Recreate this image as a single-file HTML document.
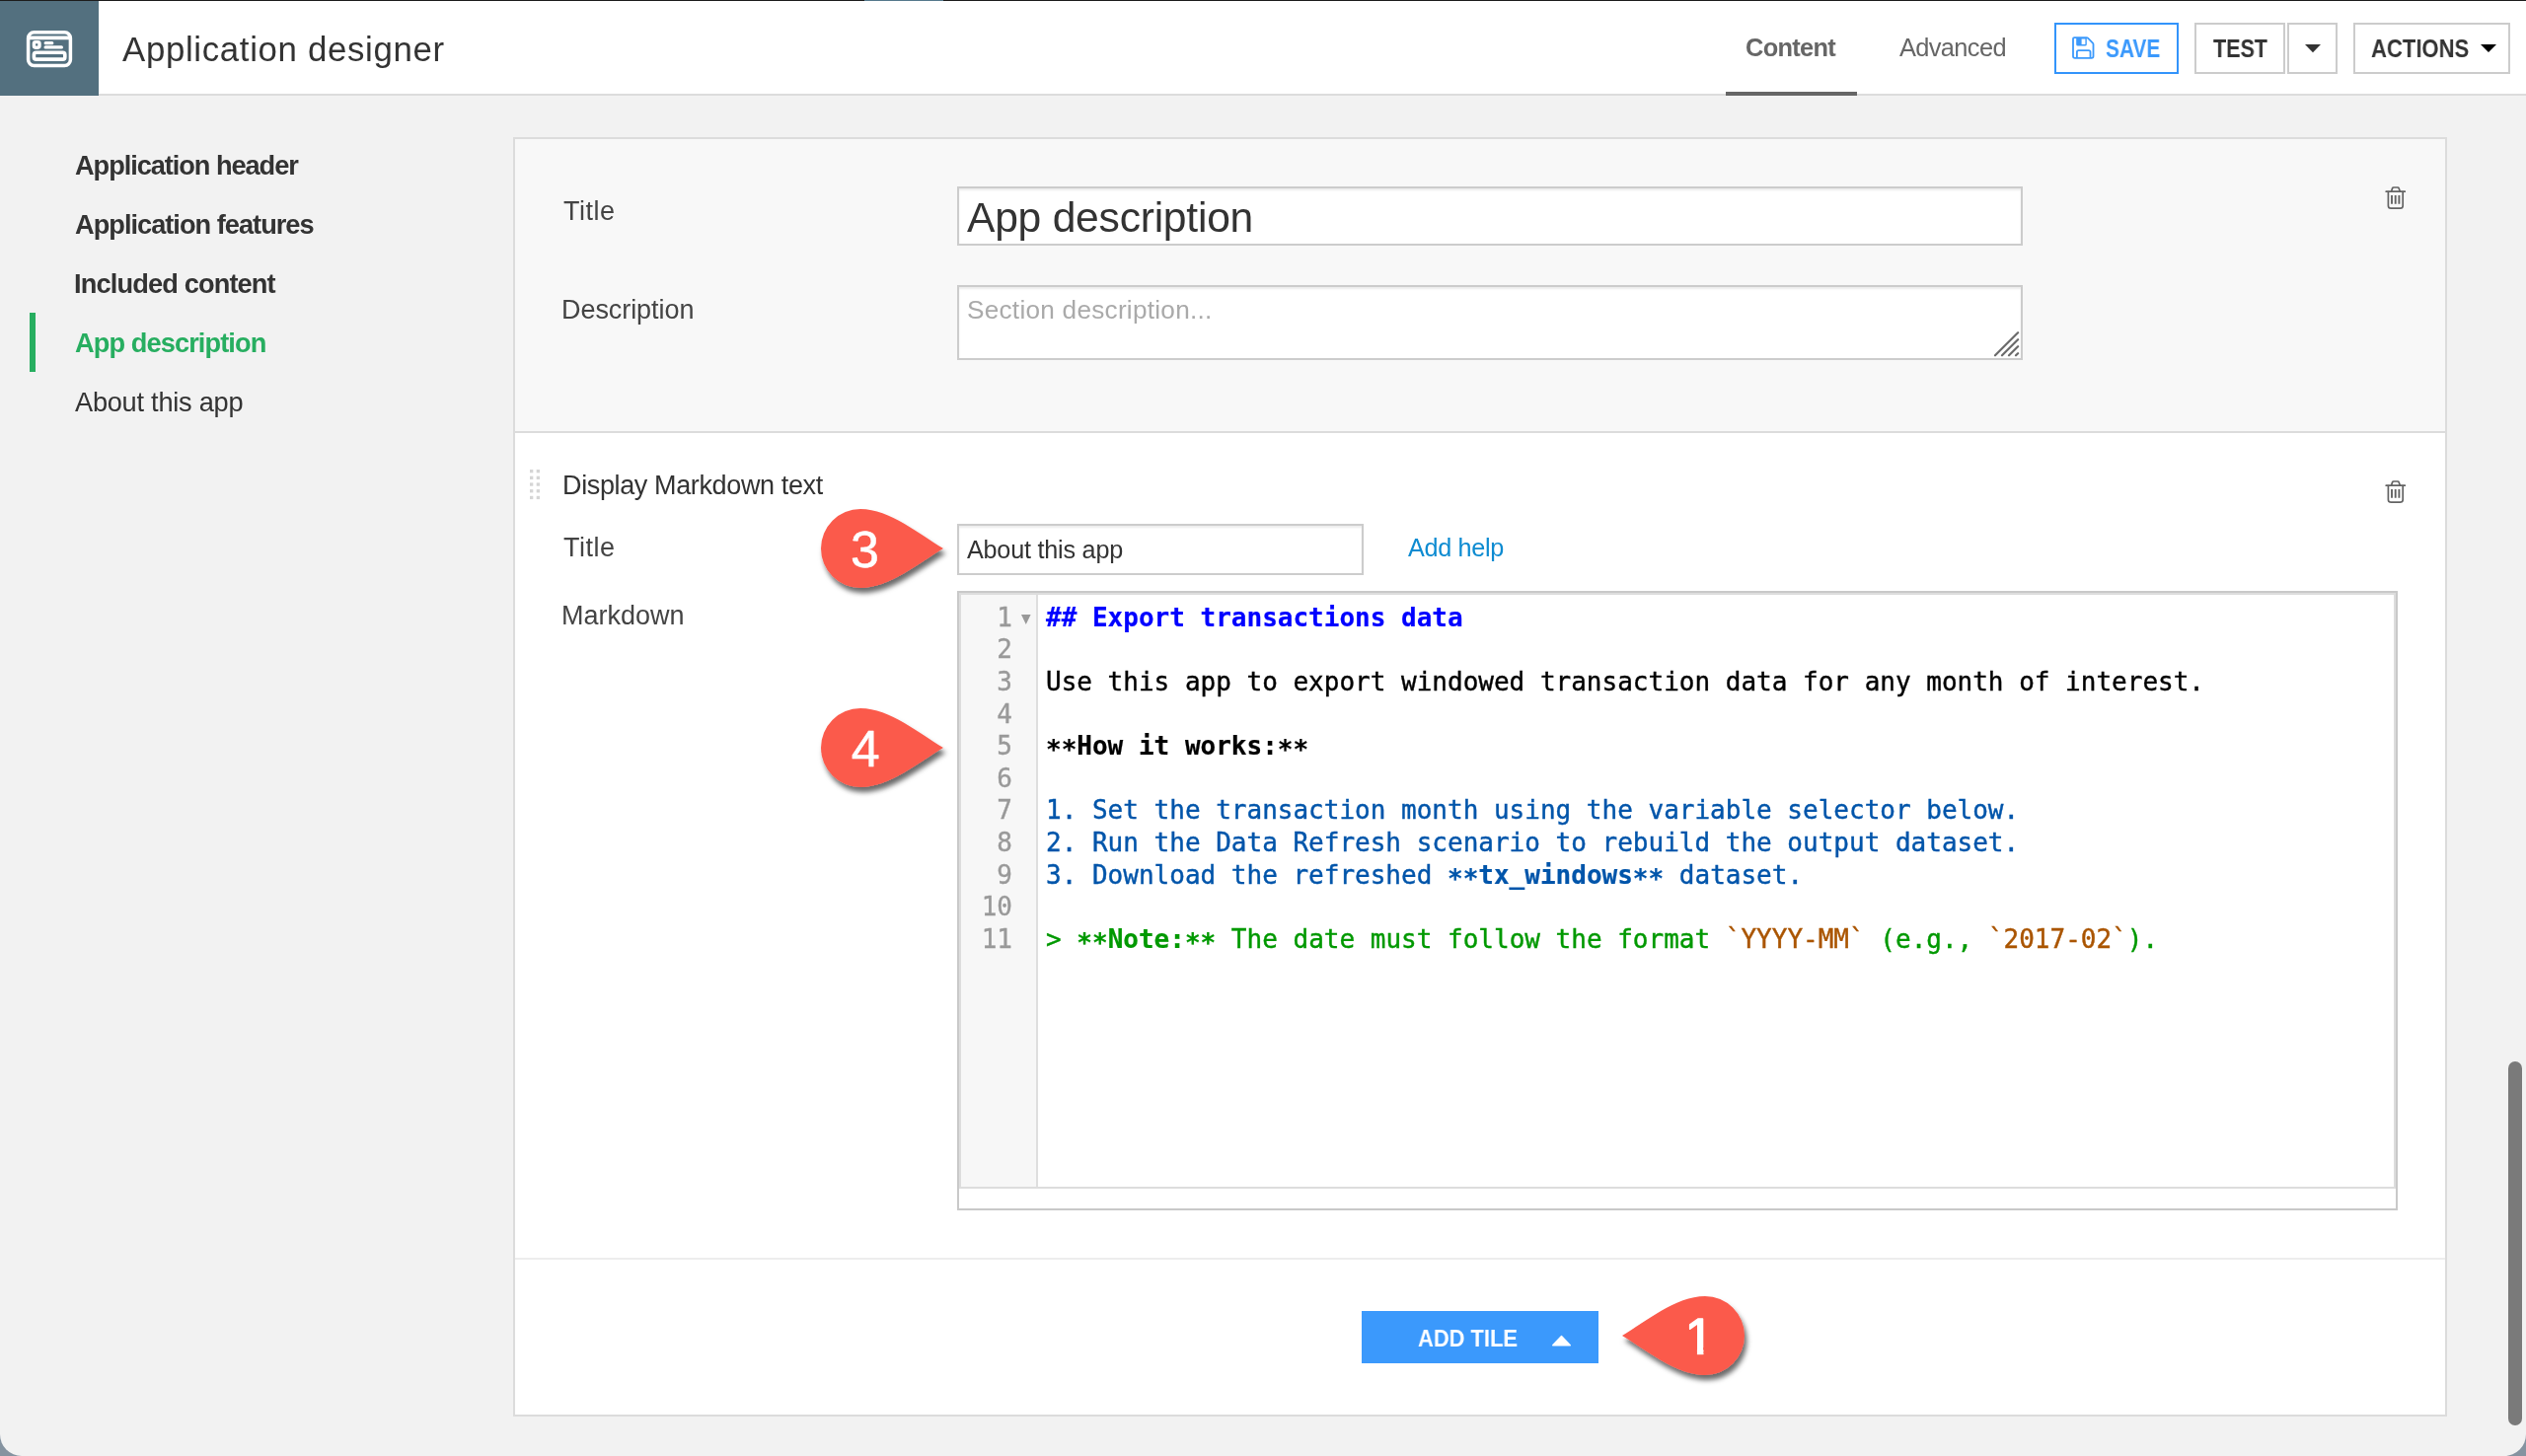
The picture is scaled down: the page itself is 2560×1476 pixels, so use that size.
<!DOCTYPE html>
<html lang="en"><head><meta charset="utf-8"><title>Application designer</title>
<style>
html,body{margin:0;padding:0}
body{width:2560px;height:1476px;position:relative;overflow:hidden;background:#8593a0;font-family:"Liberation Sans",sans-serif}
.abs{position:absolute}
.win{position:absolute;left:0;top:0;width:2560px;height:1476px;background:#f2f2f2;border-radius:0 0 22px 22px;overflow:hidden}
.t{position:absolute;white-space:nowrap;display:block;will-change:transform}
.topline{position:absolute;left:0;top:0;width:2560px;height:1px;background:#1c1c1c}
.topseg{position:absolute;left:876px;top:0;width:80px;height:1px;background:#55798c}
.hdr{position:absolute;left:0;top:1px;width:2560px;height:94px;background:#fff;border-bottom:2px solid #dcdcdc}
.ico{position:absolute;left:0;top:1px;width:100px;height:96px;background:#53707f}
.tabline{position:absolute;left:1749px;top:93px;width:133px;height:4px;background:#666}
.btn{position:absolute;top:23px;height:48px;border:2px solid #ccc;background:#fff}
.navbar{position:absolute;left:30px;top:317px;width:6px;height:60px;background:#27ae60}
.panel{position:absolute;left:520px;top:139px;width:1956px;height:1293px;border:2px solid #dcdcdc;background:#fff}
.sec1{position:absolute;left:522px;top:141px;width:1956px;height:296px;background:#f8f8f8;border-bottom:2px solid #dcdcdc}
.inp{position:absolute;background:#fff;border:2px solid #ccc;box-shadow:inset 0 2px 2px rgba(0,0,0,.075);box-sizing:border-box}
.cmo{position:absolute;left:970px;top:599px;width:1460px;height:628px;box-sizing:border-box;border:2px solid #c9c9c9;background:#fff}
.cmi{position:absolute;left:972px;top:601px;width:1456px;height:604px;box-sizing:border-box;border:2px solid #ddd;background:#fff}
.gut{position:absolute;left:974px;top:603px;width:76px;height:600px;background:#f7f7f7;border-right:2px solid #dedede}
.ln,.cl{position:absolute;font-family:"DejaVu Sans Mono","Liberation Mono",monospace;font-size:26px;line-height:32.5px;height:32.5px;white-space:pre;will-change:transform}
.ln{left:974px;width:52px;text-align:right;color:#999;-webkit-text-stroke:0.35px #999}
.cl{left:1060.2px;color:#000;-webkit-text-stroke:0.4px}
.cl b{-webkit-text-stroke:0.2px}
.as{position:relative;top:4px}
.hd{color:#00f;font-weight:700;-webkit-text-stroke:0.2px}
.v2{color:#05a}
.q{color:#090}
.cm{color:#a50}
.divider{position:absolute;left:522px;top:1275px;width:1956px;height:2px;background:#ededed}
.addbtn{position:absolute;left:1380px;top:1329px;width:240px;height:53px;background:#3b99fc}
.thumb{position:absolute;left:2542px;top:1076px;width:14px;height:369px;border-radius:7px;background:#7a7a7a}
</style></head><body>
<div class="win">
<header>
<div class="hdr"></div>
<div class="ico"></div>
<svg class="abs" style="left:24px;top:28px" width="52" height="44" viewBox="24 28 52 44" fill="none" stroke="#fff">
 <rect x="28.6" y="32.7" width="42.8" height="33.8" rx="6" stroke-width="3.5"/>
 <path d="M29 38.4H71" stroke-width="3.6"/>
 <rect x="34.4" y="42.6" width="5.6" height="5.6" rx="1.6" stroke-width="3.4"/>
 <path d="M46.2 43.7H52.8" stroke-width="3.2" stroke-linecap="round"/>
 <path d="M46.2 47.9H62.3" stroke-width="3.4" stroke-linecap="round"/>
 <rect x="34.4" y="53.3" width="31.4" height="6.8" rx="2.2" stroke-width="3.6"/>
</svg>
<div class="topline"></div><div class="topseg"></div>
<span class="t" style="left:123.8px;top:33.0px;font-size:34.8px;line-height:34.8px;height:34.8px;color:#333;letter-spacing:0.674px;">Application designer</span>
<span class="t" style="left:1769px;top:36.2px;font-size:25.4px;line-height:25.4px;height:25.4px;color:#666;font-weight:700;letter-spacing:-0.707px;">Content</span>
<span class="t" style="left:1925.3px;top:36.2px;font-size:25.4px;line-height:25.4px;height:25.4px;color:#666;letter-spacing:-0.63px;">Advanced</span>
<div class="tabline"></div>
<div class="btn" style="left:2082px;width:122px;border-color:#3394fb"></div>
<svg class="abs" style="left:2099px;top:36px" width="25" height="25" viewBox="0 0 25 25" fill="none" stroke="#3b99fc" stroke-width="1.8" stroke-linejoin="round">
 <path d="M3.2 2.1H15.6Q16.4 2.1 17 2.7L21.9 7.6Q22.5 8.2 22.5 9V21Q22.5 22.9 20.6 22.9H3.9Q2 22.9 2 21V3.3Q2 2.1 3.2 2.1Z"/>
 <path d="M5.2 2.3H15.8V9Q15.8 10.6 14.2 10.6H6.8Q5.2 10.6 5.2 9Z M10.6 3.4V8.9H14.4V3.4Z" fill="#3b99fc" fill-rule="evenodd" stroke="none"/>
 <path d="M5.9 22.7V16.8Q5.9 15.2 7.5 15.2H17.9Q19.5 15.2 19.5 16.8V22.7"/>
</svg>
<span class="t" style="left:2134.3px;top:37.1px;font-size:25.0px;line-height:25.0px;height:25.0px;color:#3b99fc;font-weight:700;transform:scaleX(0.836);transform-origin:0 0;">SAVE</span>
<div class="btn" style="left:2224px;width:88px"></div>
<span class="t" style="left:2242.5px;top:37.1px;font-size:25.0px;line-height:25.0px;height:25.0px;color:#333;font-weight:700;transform:scaleX(0.8614);transform-origin:0 0;">TEST</span>
<div class="btn" style="left:2318px;width:47px"></div>
<svg class="abs" style="left:2335px;top:44px" width="18" height="10" viewBox="0 0 18 10"><path d="M1 1H17L9 9.2Z" fill="#333"/></svg>
<div class="btn" style="left:2385px;width:155px"></div>
<span class="t" style="left:2402.7px;top:37.1px;font-size:25.0px;line-height:25.0px;height:25.0px;color:#333;font-weight:700;transform:scaleX(0.8826);transform-origin:0 0;">ACTIONS</span>
<svg class="abs" style="left:2513px;top:44px" width="18" height="10" viewBox="0 0 18 10"><path d="M1 1H17L9 9Z" fill="#000"/></svg>
</header>
<nav>
<span class="t" style="left:75.8px;top:154.1px;font-size:27.2px;line-height:27.2px;height:27.2px;color:#333;font-weight:700;letter-spacing:-1.056px;">Application header</span><span class="t" style="left:75.8px;top:214.1px;font-size:27.2px;line-height:27.2px;height:27.2px;color:#333;font-weight:700;letter-spacing:-0.986px;">Application features</span><span class="t" style="left:75.2px;top:274.1px;font-size:27.2px;line-height:27.2px;height:27.2px;color:#333;font-weight:700;letter-spacing:-0.856px;">Included content</span>
<div class="navbar"></div>
<span class="t" style="left:76.2px;top:333.9px;font-size:27.2px;line-height:27.2px;height:27.2px;color:#27ae60;font-weight:700;letter-spacing:-0.902px;">App description</span><span class="t" style="left:76.2px;top:393.9px;font-size:27.2px;line-height:27.2px;height:27.2px;color:#333;letter-spacing:-0.254px;">About this app</span>
</nav>
<main>

<div class="panel"></div>
<div class="sec1"></div>
<span class="t" style="left:571px;top:200.5px;font-size:27px;line-height:27px;height:27px;color:#444;letter-spacing:0.503px;">Title</span>
<div class="inp" style="left:970px;top:189px;width:1080px;height:60px"></div>
<span class="t" style="left:980.1px;top:198.6px;font-size:42.6px;line-height:42.6px;height:42.6px;color:#333;letter-spacing:-0.237px;">App description</span>
<span class="t" style="left:569.3px;top:300.5px;font-size:27px;line-height:27px;height:27px;color:#444;letter-spacing:-0.064px;">Description</span>
<div class="inp" style="left:970px;top:289px;width:1080px;height:76px"></div>
<span class="t" style="left:980px;top:301.2px;font-size:26.2px;line-height:26.2px;height:26.2px;color:#aaa;letter-spacing:0.247px;">Section description...</span>
<svg class="abs" style="left:2018px;top:333px" width="30" height="30" viewBox="0 0 30 30" stroke="#6b6b6b" stroke-width="2.2" stroke-linecap="round"><path d="M4 27.3L27.1 4.2M11 27.3L27.1 11.2M18 27.3L27.1 18.2M25 27.3L27.1 25.2"/></svg>
<svg class="abs" style="left:2416px;top:188px" width="24" height="26" viewBox="0 0 24 26" fill="none" stroke="#636363" stroke-width="1.7" stroke-linecap="round" stroke-linejoin="round">
<path d="M2.2 6.2H21.3"/><path d="M7.6 5.8L8.6 2.9Q8.9 2 9.8 2H14Q14.9 2 15.2 2.9L16.2 5.8"/>
<path d="M4.4 6.6V20.4Q4.4 23.1 7.1 23.1H16.5Q19.2 23.1 19.2 20.4V6.6"/>
<path d="M8 10.1V18.8M11.7 10.1V18.8M15.4 10.1V18.8" stroke-width="1.9" stroke-linecap="butt"/></svg>

<svg class="abs" style="left:537px;top:476px" width="12" height="32" viewBox="0 0 12 32" fill="#d5d5d5"><rect x="0" y="0" width="3.3" height="3.3"/><rect x="0" y="6.7" width="3.3" height="3.3"/><rect x="0" y="13.4" width="3.3" height="3.3"/><rect x="0" y="20.1" width="3.3" height="3.3"/><rect x="0" y="26.8" width="3.3" height="3.3"/><rect x="6.7" y="0" width="3.3" height="3.3"/><rect x="6.7" y="6.7" width="3.3" height="3.3"/><rect x="6.7" y="13.4" width="3.3" height="3.3"/><rect x="6.7" y="20.1" width="3.3" height="3.3"/><rect x="6.7" y="26.8" width="3.3" height="3.3"/></svg>
<span class="t" style="left:569.6px;top:478.6px;font-size:27px;line-height:27px;height:27px;color:#333;letter-spacing:-0.37px;">Display Markdown text</span>
<svg class="abs" style="left:2416px;top:486.3px" width="24" height="26" viewBox="0 0 24 26" fill="none" stroke="#636363" stroke-width="1.7" stroke-linecap="round" stroke-linejoin="round">
<path d="M2.2 6.2H21.3"/><path d="M7.6 5.8L8.6 2.9Q8.9 2 9.8 2H14Q14.9 2 15.2 2.9L16.2 5.8"/>
<path d="M4.4 6.6V20.4Q4.4 23.1 7.1 23.1H16.5Q19.2 23.1 19.2 20.4V6.6"/>
<path d="M8 10.1V18.8M11.7 10.1V18.8M15.4 10.1V18.8" stroke-width="1.9" stroke-linecap="butt"/></svg>
<span class="t" style="left:571px;top:541.9px;font-size:27px;line-height:27px;height:27px;color:#444;letter-spacing:0.503px;">Title</span>
<div class="inp" style="left:970px;top:531px;width:412px;height:52px"></div>
<span class="t" style="left:980.2px;top:545.2px;font-size:25.2px;line-height:25.2px;height:25.2px;color:#333;letter-spacing:-0.218px;">About this app</span>
<span class="t" style="left:1426.7px;top:542.6px;font-size:25.2px;line-height:25.2px;height:25.2px;color:#0d8bd1;letter-spacing:-0.304px;">Add help</span>
<span class="t" style="left:569px;top:610.6px;font-size:27px;line-height:27px;height:27px;color:#444;letter-spacing:0.01px;">Markdown</span>
<div class="cmo"></div><div class="cmi"></div><div class="gut"></div>
<div class="ln" style="top:609.7px">1</div><div class="ln" style="top:642.3000000000001px">2</div><div class="ln" style="top:674.9000000000001px">3</div><div class="ln" style="top:707.5px">4</div><div class="ln" style="top:740.1px">5</div><div class="ln" style="top:772.7px">6</div><div class="ln" style="top:805.3000000000001px">7</div><div class="ln" style="top:837.9000000000001px">8</div><div class="ln" style="top:870.5px">9</div><div class="ln" style="top:903.1000000000001px">10</div><div class="ln" style="top:935.7px">11</div>
<svg class="abs" style="left:1034.5px;top:623px" width="10" height="10" viewBox="0 0 10 10"><path d="M0 0H9.6L4.8 10Z" fill="#999"/></svg>
<div class="cl" style="top:609.7px"><span class="hd">## Export transactions data</span></div><div class="cl" style="top:674.9000000000001px">Use this app to export windowed transaction data for any month of interest.</div><div class="cl" style="top:740.1px"><b><span class="as">**</span>How it works:<span class="as">**</span></b></div><div class="cl" style="top:805.3000000000001px"><span class="v2">1. Set the transaction month using the variable selector below.</span></div><div class="cl" style="top:837.9000000000001px"><span class="v2">2. Run the Data Refresh scenario to rebuild the output dataset.</span></div><div class="cl" style="top:870.5px"><span class="v2">3. Download the refreshed <b><span class="as">**</span>tx_windows<span class="as">**</span></b> dataset.</span></div><div class="cl" style="top:935.7px"><span class="q">&gt; <b><span class="as">**</span>Note:<span class="as">**</span></b> The date must follow the format <span class="cm">`YYYY-MM`</span> (e.g., <span class="cm">`2017-02`</span>).</span></div>
<div class="divider"></div>
<div class="addbtn"></div>
<span class="t" style="left:1437.2px;top:1344.9px;font-size:24.8px;line-height:24.8px;height:24.8px;color:#fff;font-weight:700;transform:scaleX(0.8832);transform-origin:0 0;">ADD TILE</span>
<svg class="abs" style="left:1571px;top:1352px" width="23" height="14" viewBox="0 0 23 14"><path d="M11.5 2.6L20.3 11.8H2.7Z" fill="#fff" stroke="#fff" stroke-width="1.4" stroke-linejoin="round"/></svg>
<svg class="abs" style="left:0;top:0;pointer-events:none" width="2560" height="1476" viewBox="0 0 2560 1476">
 <defs><clipPath id="c1"><path d="M1690 1320H1750V1366H1726.35V1373.2H1719.95V1366H1690Z"/></clipPath><filter id="ds" x="-30%" y="-30%" width="160%" height="170%"><feDropShadow dx="2.5" dy="5.2" stdDeviation="2.4" flood-color="#000" flood-opacity="0.58"/></filter></defs>
 <g filter="url(#ds)"><path transform="translate(872,556)" d="M84,0 C60,-14 30,-40 0,-40 A40,40 0 1,0 0,40 C30,40 60,14 84,0 Z" fill="#fb5a4c"/></g><text x="876.5" y="574.7" text-anchor="middle" font-family="Liberation Sans, sans-serif" font-size="52" fill="#fff" stroke="#fff" stroke-width="0.5" stroke-linejoin="round">3</text>
 <g filter="url(#ds)"><path transform="translate(872,758)" d="M84,0 C60,-14 30,-40 0,-40 A40,40 0 1,0 0,40 C30,40 60,14 84,0 Z" fill="#fb5a4c"/></g><text x="877.3" y="776.7" text-anchor="middle" font-family="Liberation Sans, sans-serif" font-size="52" fill="#fff" stroke="#fff" stroke-width="0.5" stroke-linejoin="round">4</text>
 <g filter="url(#ds)"><path transform="translate(1728,1354) scale(-1,1)" d="M84,0 C60,-14 30,-40 0,-40 A40,40 0 1,0 0,40 C30,40 60,14 84,0 Z" fill="#fb5a4c"/></g><text x="1722.1" y="1372.7" text-anchor="middle" font-family="Liberation Sans, sans-serif" font-size="52" fill="#fff" stroke="#fff" stroke-width="1.6" stroke-linejoin="round" clip-path="url(#c1)">1</text>
</svg>
</main>
<div class="thumb"></div>
</div>
</body></html>
